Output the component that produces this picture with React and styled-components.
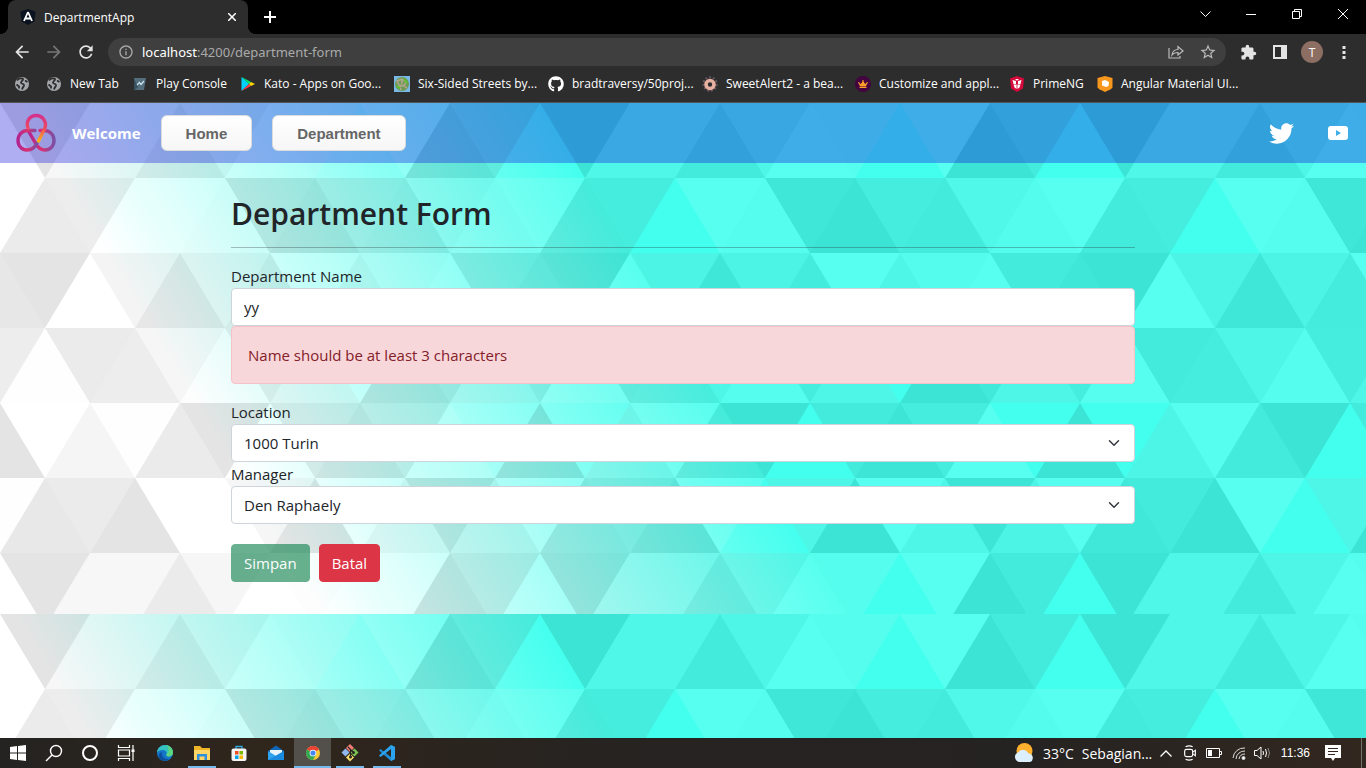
import React from "react";
import styled, { createGlobalStyle } from "styled-components";
import { FaGithub, FaTwitter, FaCrown } from "react-icons/fa";
import { MdExtension, MdRefresh, MdStarBorder, MdArrowBack, MdArrowForward, MdInfoOutline } from "react-icons/md";

const uiFont = `"Open Sans", "Segoe UI", sans-serif`;

const GlobalStyle = createGlobalStyle`
  *, *::before, *::after { box-sizing: border-box; }
  body { margin: 0; font-family: ${uiFont}; color: #212529; }
  button, input, select { font: inherit; margin: 0; }
  svg { display: block; flex-shrink: 0; }
`;

/* ---------- layout ---------- */

const Shell = styled.div`
  min-height: 100vh;
  display: flex;
  flex-direction: column;
`;

const TabStrip = styled.header`
  display: flex;
  align-items: stretch;
  height: 34px;
  padding: 0 0 0 8px;
  background: #000;
  color: #fff;
`;

const Tab = styled.div`
  position: relative;
  display: flex;
  align-items: center;
  gap: 8px;
  width: 240px;
  padding: 0 8px 0 12px;
  border-radius: 8px 8px 0 0;
  background: #2d2d2d;
  font-size: 12px;
  &::before, &::after {
    content: "";
    position: absolute;
    bottom: 0;
    width: 8px;
    height: 8px;
  }
  &::before { left: -8px; background: radial-gradient(circle at 0 0, transparent 8px, #2d2d2d 8px); }
  &::after { right: -8px; background: radial-gradient(circle at 100% 0, transparent 8px, #2d2d2d 8px); }
`;

const TabTitle = styled.span`
  flex: 1;
`;

const IconButton = styled.button`
  display: grid;
  place-items: center;
  width: ${(p) => p.$w || 32}px;
  height: ${(p) => p.$h || 28}px;
  padding: 0;
  border: 0;
  background: none;
  color: ${(p) => p.$color || "#e4e4e4"};
`;

const WindowControls = styled.div`
  display: flex;
  margin-left: auto;
`;

const Toolbar = styled.div`
  display: flex;
  align-items: center;
  height: 36px;
  padding: 0 6px;
  background: #2d2d2d;
`;

const AddressBar = styled.div`
  display: flex;
  align-items: center;
  flex: 1;
  height: 28px;
  margin: 0 6px 0 6px;
  padding: 0 2px 0 10px;
  gap: 8px;
  border-radius: 14px;
  background: #3f3f3f;
  color: #aaa;
`;

const AddressText = styled.span`
  flex: 1;
  font-size: 13px;
  font-family: "Noto Sans", ${uiFont};
  b { color: #fff; font-weight: 400; }
`;

const Avatar = styled.span`
  display: grid;
  place-items: center;
  width: 22px;
  height: 22px;
  border-radius: 50%;
  background: #8d6e63;
  color: #fff;
  font-size: 12px;
`;

const Bookmarks = styled.nav`
  display: flex;
  align-items: center;
  height: 33px;
  padding: 0 14px 5px;
  gap: 16px;
  background: #2d2d2d;
  border-bottom: 1px solid #555;
`;

const Bookmark = styled.a`
  display: flex;
  align-items: center;
  gap: 8px;
  flex: 0 0 auto;
  width: ${(p) => p.$w}px;
  color: #fff;
  font-size: 12px;
  white-space: nowrap;
  text-decoration: none;
`;

const Page = styled.div`
  position: relative;
  flex: 1;
  overflow: hidden;
  background: #44ffee;
`;

const Backdrop = styled.svg`
  position: absolute;
  inset: 0;
  width: 100%;
  height: 100%;
`;

const NavBar = styled.nav`
  position: relative;
  display: flex;
  align-items: center;
  height: 60px;
  padding: 0 18px 0 16px;
  background: rgba(20, 18, 220, 0.34);
`;

const Welcome = styled.span`
  margin: 0 20px 0 16px;
  color: #fff;
  font-size: 15px;
  font-weight: 700;
`;

const NavButton = styled.button`
  height: 36px;
  margin-right: 20px;
  padding: 0 24px;
  border: 1px solid #dcdcdc;
  border-radius: 6px;
  background: linear-gradient(#fff, #f6f6f6);
  color: #666;
  font-family: "Liberation Sans", Arial, sans-serif;
  font-size: 15px;
  font-weight: 700;
`;

const Social = styled.div`
  display: flex;
  align-items: center;
  gap: 34px;
  margin-left: auto;
  a { color: #fff; }
`;

const Form = styled.form`
  position: relative;
  width: calc(100% - 48px);
  max-width: 904px;
  margin: 0 auto;
  padding: 32px 0;
  font-size: 15px;
  line-height: 24px;
`;

const Title = styled.h1`
  margin: 0;
  padding-bottom: 14px;
  border-bottom: 1px solid rgba(33, 37, 41, 0.3);
  font-size: 30px;
  line-height: 38px;
  font-weight: 600;
`;

const Field = styled.div`
  margin-top: ${(p) => p.$top || 0}px;
`;

const Label = styled.label`
  display: block;
`;

const control = `
  display: block;
  width: 100%;
  height: 38px;
  padding: 6px 12px;
  border: 1px solid #ced4da;
  border-radius: 4px;
  background: #fff;
  color: #212529;
  font-size: 15px;
  line-height: 24px;
`;

const TextInput = styled.input`${control}`;

const Select = styled.select`
  ${control}
  appearance: none;
`;

const SelectBox = styled.div`
  position: relative;
  svg { position: absolute; right: 13px; top: 13px; pointer-events: none; }
`;

const Alert = styled.div`
  padding: 16px;
  border: 1px solid #f5c2c7;
  border-radius: 4px;
  background: #f8d7da;
  color: #842029;
`;

const Actions = styled.div`
  display: flex;
  gap: 9px;
  margin-top: 20px;
`;

const Button = styled.button`
  height: 38px;
  padding: 6px 12px;
  border: 1px solid ${(p) => p.$color};
  border-radius: 4px;
  background: ${(p) => p.$color};
  color: #fff;
  font-weight: 500;
  line-height: 24px;
  &:disabled { opacity: 0.65; }
`;

const Taskbar = styled.footer`
  display: flex;
  height: 30px;
  background: linear-gradient(90deg, #242321, #30261c 20%, #262321 45%, #252322 75%, #32271f);
  color: #fff;
`;

const TaskGroup = styled.div`
  display: flex;
  margin-left: ${(p) => p.$left || 0}px;
`;

const TaskButton = styled.button`
  display: grid;
  place-items: center;
  width: ${(p) => p.$w}px;
  height: 30px;
  padding: 0;
  border: 0;
  background: ${(p) => (p.$active ? "#53504c" : "none")};
  background-image: ${(p) => (p.$open ? "linear-gradient(#76b9ed, #76b9ed)" : "none")};
  background-repeat: no-repeat;
  background-position: bottom;
  background-size: ${(p) => (p.$active ? "100%" : "28px")} 2px;
`;

const Tray = styled.div`
  display: flex;
  align-items: center;
  margin-left: auto;
`;

const Weather = styled.div`
  display: flex;
  align-items: center;
  gap: 8px;
  width: 141px;
  white-space: nowrap;
  font-size: 14px;
`;

const Clock = styled.time`
  width: 38px;
  text-align: right;
  font-size: 12px;
  font-family: "Liberation Sans", sans-serif;
`;

const ShowDesktop = styled.div`
  width: 5px;
  height: 30px;
  margin-left: 5px;
  border-left: 1px solid #77706a;
`;

/* ---------- backdrop ---------- */

const SIDE = 90;
const ROW = 75;
const TILE = 511;
const COLUMNS = 60;

// Shade of each facet: 0 is clear, 1 (lightest) to 5 (darkest).
const SHADES = [
  [5, 2.2, 2.2, 4, 2.3, 1, 1.3, 0, 1, 5, 4, 0],
  [4, 3.6, 0, 1, 1.3, 4.6, 5, 3.6, 4, 2, 1.4, 1],
  [5, 1, 2.7, 4.6, 2.6, 3.8, 1, 2.3, 1.5, 1, 4, 4.6],
  [1.2, 3.9, 3.7, 2.3, 1.3, 3.7, 2.3, 0, 5, 4.2, 2.4, 3.6],
  [0, 2.5, 1.2, 4, 5, 0, 4, 4.8, 3.7, 1, 0, 5],
  [4.4, 4, 5, 1, 0, 2.4, 5, 1, 2.4, 4.8, 2.6, 1.2],
];

const facets = [];
for (let r = 0; r < 7; r++) {
  const shades = SHADES[r % 6];
  const y = r * ROW;
  for (let i = -1; i < COLUMNS; i++) {
    const level = shades[(i + 12) % 12];
    if (!level) continue;
    const mid = (i + 1) * (SIDE / 2);
    const down = (i + r + 12) % 2 === 0;
    const [base, tip] = down ? [y, y + ROW] : [y + ROW, y];
    const g = Math.round((255 * (5 - level)) / 4);
    facets.push(
      <polygon
        key={`${r}-${i}`}
        points={`${mid - 45},${base} ${mid + 45},${base} ${mid},${tip}`}
        fill={`rgb(${g},${g},${g})`}
        fillOpacity="0.105"
      />
    );
  }
}

const Triangles = () => (
  <Backdrop aria-hidden="true">
    <defs>
      <linearGradient id="wash" gradientUnits="userSpaceOnUse" x1="15" y1="0" x2="405" y2="-234">
        <stop offset="0" stopColor="#fff" />
        <stop offset="1" stopColor="#43ffee" />
      </linearGradient>
      <clipPath id="tile"><rect width="2700" height={TILE} /></clipPath>
      <g id="facets" clipPath="url(#tile)">
        <rect width="2700" height={TILE} fill="url(#wash)" />
        {facets}
      </g>
    </defs>
    <use href="#facets" />
    <use href="#facets" y={TILE} />
    <use href="#facets" y={TILE * 2} />
  </Backdrop>
);

/* ---------- icons ---------- */

const Logo = () => (
  <svg width="40" height="40" viewBox="0 0 40 40" fill="none" strokeWidth="3.400" strokeLinecap="round">
    <defs>
      <linearGradient id="lg1" x1="0" y1="0" x2="0" y2="1">
        <stop offset="0" stopColor="#d4318c" /><stop offset=".5" stopColor="#ef4a5f" /><stop offset="1" stopColor="#fbb116" />
      </linearGradient>
      <linearGradient id="lg2" x1="0" y1="0" x2="1" y2="0">
        <stop offset="0" stopColor="#b1248f" /><stop offset=".5" stopColor="#d9306f" /><stop offset="1" stopColor="#7a4fa5" />
      </linearGradient>
    </defs>
    <path d="M24 17.500H28C34 17.500 38 22 38 27.500C38 33 34 37 29 37C25 37 22 34.500 20 31L13 19" stroke="url(#lg2)" />
    <path d="M21 30C19 34.500 16 37 11 37C6 37 2 33 2 27.500C2 22 6 17.500 12 17.500H19" stroke="url(#lg2)" />
    <path d="M12 15C9.500 8.500 14 2.500 20 2.500C27 2.500 31.500 9.500 28.500 16L22.500 28" stroke="url(#lg1)" />
  </svg>
);

const YouTube = () => (
  <svg width="20" height="14" viewBox="0 0 20 14">
    <path fillRule="evenodd" fill="currentColor" d="M3 0H17Q20 0 20 3V11Q20 14 17 14H3Q0 14 0 11V3Q0 0 3 0ZM8 4V10L13 7Z" />
  </svg>
);

const Chevron = () => (
  <svg width="16" height="12" viewBox="0 0 16 16"><path d="M2 5l6 6 6-6" fill="none" stroke="#343a40" strokeWidth="2" strokeLinecap="round" strokeLinejoin="round" /></svg>
);

const AngularShield = () => (
  <svg width="16" height="16" viewBox="0 0 16 16">
    <path d="M8 0L15.500 2.500L14.500 12.500L8 16L1.500 12.500L.5 2.500Z" fill="#0b1220" />
    <path d="M8 3L4 12M8 3L12 12M5.500 9.500H10.500" stroke="#fff" strokeWidth="1.800" fill="none" />
  </svg>
);

const Globe = () => (
  <svg width="16" height="16" viewBox="0 0 16 16">
    <circle cx="8" cy="8" r="7" fill="#a4a8ad" />
    <path d="M3 4.500C5 2 8 2 9 3C9.500 4.500 7 5 7 6.500C7 8 9.500 7.500 10 9C10.500 10.500 8.500 11 8 13.500M11 4.500L13.500 6M2.500 8.500L5 10.500V12.500" stroke="#2d2d2d" strokeWidth="1.800" fill="none" />
  </svg>
);

const PlayConsole = () => (
  <svg width="16" height="16" viewBox="0 0 16 16">
    <path d="M2 2H14L12 14H8L2 14Z" fill="#54707d" /><path d="M2 2V15L6 11Z" fill="#37515e" />
    <path d="M5 9L7.500 6.500L9 8.500L12 5" stroke="#cfe6f0" strokeWidth="1.200" fill="none" />
  </svg>
);

const GooglePlay = () => (
  <svg width="16" height="16" viewBox="0 0 16 16">
    <path d="M1.500 1V15L9 8Z" fill="#00d0ff" /><path d="M1.500 1L11 6L9 8Z" fill="#00e676" />
    <path d="M1.500 15L11 10L9 8Z" fill="#ff3a44" /><path d="M11 6L15 8L11 10L9 8Z" fill="#ffd500" />
  </svg>
);

const HexMap = () => (
  <svg width="16" height="16" viewBox="0 0 16 16">
    <rect width="16" height="16" fill="#79b9e8" />
    <circle cx="8" cy="8" r="7" fill="#6f9a56" />
    <path d="M3 5L8 3L12 6L10 10L5 9ZM8 3V8M5 9L7 14M10 10L13 12" stroke="#b6a58f" strokeWidth="1.500" fill="none" />
    <path d="M3 10L6 12M10 3L13 7" stroke="#5cc32d" strokeWidth="2" />
  </svg>
);

const Donut = () => (
  <svg width="16" height="16" viewBox="0 0 16 16" fill="none">
    <circle cx="8" cy="8" r="6.700" stroke="#66545f" strokeWidth="2" strokeDasharray="2 1.800" />
    <circle cx="8" cy="8.500" r="4" stroke="#e8b0a0" strokeWidth="3.600" />
  </svg>
);

const Crown = () => (
  <svg width="16" height="16" viewBox="0 0 16 16">
    <circle cx="8" cy="8" r="8" fill="#43043f" /><FaCrown x="3" y="3" width="10" height="10" size="10" color="#ff9d2b" />
  </svg>
);

const Prime = () => (
  <svg width="16" height="16" viewBox="0 0 16 16">
    <path d="M8 0L15 2.500L14 12.500L8 16L2 12.500L1 2.500Z" fill="#d5093a" />
    <path d="M3.500 4L7 5V8H4.500ZM12.500 4L9 5V8H11.500ZM4.500 8.500H7.600V13L5.500 11.500ZM11.500 8.500H8.400V13L10.500 11.500ZM6 3H10L8 4.800Z" fill="#fff" />
  </svg>
);

const MaterialKit = () => (
  <svg width="16" height="16" viewBox="0 0 16 16">
    <path d="M8 0L15.500 2V11.500Q15 13 8 16Q1 13 .5 11.500V2Z" fill="#f7981d" />
    <path d="M5 5L8 4L12 6L11.500 10L9 11L5 9.500Z" fill="#fff" />
  </svg>
);

const Svg = ({ s = 18, children, ...rest }) => (
  <svg width={s} height={s} viewBox="0 0 18 18" fill="none" stroke="#fff" strokeWidth="1" {...rest}>{children}</svg>
);

const WindowsIcon = () => (
  <Svg><path stroke="none" fill="#fff" d="M1 3L8 2V8.500H1ZM9 2L17 1V8.500H9ZM1 9.500H8V16L1 15ZM9 9.500H17V17L9 16Z" /></Svg>
);
const SearchIcon = () => (<Svg strokeWidth="1.400"><circle cx="11" cy="7" r="5.500" /><path d="M7 11L1 17" /></Svg>);
const CortanaIcon = () => (<Svg strokeWidth="2"><circle cx="9" cy="9" r="7" /></Svg>);
const TaskViewIcon = () => (
  <Svg strokeWidth="1.200"><path d="M1.500 1V3.500H12.500V1M1.500 17V14.500H12.500V17M1.500 6H12.500V12H1.500ZM16 1V17" /><path d="M14.500 5.500H17.500V8H14.500Z" fill="#fff" stroke="none" /></Svg>
);
const EdgeIcon = () => (
  <Svg stroke="none">
    <circle cx="9" cy="9" r="8" fill="#1374c8" />
    <path d="M1 9C1 4 5 1 9 1C14 1 17 5 17 8.500C17 11 15 12.500 12.500 12.500C10.500 12.500 9.500 11.500 10.500 10C11.500 8 9 5.500 6 6C3 6.300 1.500 7.500 1 9Z" fill="#35c1c0" />
    <path d="M10 1C14.500 1.500 17 5 17 8.500C17 11 15 12.500 12.500 12.500C11 12.500 10 11.500 10.500 10C13 9 14 3 10 1Z" fill="#5ed67f" />
    <path d="M6 8C5 12 8 15.500 13 15C11 17 7 17.500 4 15C2 12 3 9 6 8Z" fill="#0c4f9e" />
  </Svg>
);
const FolderIcon = () => (
  <Svg stroke="none"><path d="M1 2H7L9 4H17V16H1Z" fill="#f0b429" /><path d="M1 6H17V16H1Z" fill="#ffd767" /><path d="M4 16V10H14V16H11.500V12.500H6.500V16Z" fill="#2f8fdd" /></Svg>
);
const StoreIcon = () => (
  <Svg stroke="none">
    <path d="M6 5V2.500H12V5" stroke="#2fa8e0" strokeWidth="1.300" /><rect x="1.500" y="4.500" width="15" height="12.500" rx="2" fill="#f4f4f4" />
    <path d="M5 7H8.500V10.500H5Z" fill="#f25022" /><path d="M9.500 7H13V10.500H9.500Z" fill="#7fba00" />
    <path d="M5 11.500H8.500V15H5Z" fill="#00a4ef" /><path d="M9.500 11.500H13V15H9.500Z" fill="#ffb900" />
  </Svg>
);
const MailIcon = () => (
  <Svg stroke="none"><path d="M1 7L9 1.500L17 7V16H1Z" fill="#1066b5" /><path d="M3 6H15V12H3Z" fill="#e9f4fc" /><path d="M1 7L9 12L17 7V16H1Z" fill="#2ea3ee" /><path d="M1 16L17 7V16Z" fill="#1b8be0" /></Svg>
);
const ChromeIcon = () => (
  <Svg stroke="none" s={14}>
    <circle cx="9" cy="9" r="9" fill="#fcc934" />
    <path d="M9 9L1.200 4.500A9 9 0 0 1 16.800 4.500Z" fill="#ea4335" />
    <path d="M9 9L1.200 4.500A9 9 0 0 0 9 18L13 11Z" fill="#34a853" />
    <circle cx="9" cy="9" r="4.300" fill="#fff" /><circle cx="9" cy="9" r="3.300" fill="#4285f4" />
  </Svg>
);
const GitIcon = () => (
  <Svg stroke="none">
    <path d="M9 0L13 4L9 8L5 4Z" fill="#f27f78" /><path d="M4.500 4.500L8.500 8.500L4.500 12.500L.5 8.500Z" fill="#90b6ee" />
    <path d="M13.500 4.500L17.500 8.500L13.500 12.500L9.500 8.500Z" fill="#79c657" /><path d="M9 9.500L13 13.500L9 17.500L5 13.500Z" fill="#f5dd6c" />
    <path d="M7 3L12 8M9.500 6V14" stroke="#2b2320" strokeWidth="1.200" /><circle cx="9.500" cy="13" r="1.500" fill="#2b2320" /><circle cx="12.500" cy="8.500" r="1.500" fill="#2b2320" />
  </Svg>
);
const CodeIcon = () => (
  <Svg stroke="none"><path d="M13 1L17 3V15L13 17L1 6.500L2.500 5L13 13Z" fill="#1f8ad2" /><path d="M13 1L1 11.500L2.500 13L13 5V17L17 15V3Z" fill="#2ba3ee" /></Svg>
);
const WeatherIcon = () => (
  <svg width="22" height="22" viewBox="0 0 22 22">
    <circle cx="11.500" cy="9" r="8" fill="#ffb02e" />
    <path d="M6 20A5 5 0 0 1 5 10.500A6 6 0 0 1 15.500 11.500A4.400 4.400 0 0 1 17 20Z" fill="#dcefff" />
  </svg>
);

/* ---------- data ---------- */

const bookmarks = [
  { label: "", icon: <Globe />, w: 16 },
  { label: "New Tab", icon: <Globe />, w: 70 },
  { label: "Play Console", icon: <PlayConsole />, w: 92 },
  { label: "Kato - Apps on Goo...", icon: <GooglePlay />, w: 138 },
  { label: "Six-Sided Streets by...", icon: <HexMap />, w: 138 },
  { label: "bradtraversy/50proj...", icon: <FaGithub size={16} />, w: 138 },
  { label: "SweetAlert2 - a bea...", icon: <Donut />, w: 137 },
  { label: "Customize and appl...", icon: <Crown />, w: 138 },
  { label: "PrimeNG", icon: <Prime />, w: 72 },
  { label: "Angular Material UI...", icon: <MaterialKit />, w: 138 },
];

const systemTasks = [
  ["Start", <WindowsIcon />],
  ["Search", <SearchIcon />],
  ["Cortana", <CortanaIcon />],
  ["Task View", <TaskViewIcon />],
];

const appTasks = [
  { name: "Edge", icon: <EdgeIcon /> },
  { name: "File Explorer", icon: <FolderIcon />, open: true },
  { name: "Store", icon: <StoreIcon /> },
  { name: "Mail", icon: <MailIcon /> },
  { name: "Chrome", icon: <ChromeIcon />, open: true, active: true },
  { name: "Git", icon: <GitIcon />, open: true },
  { name: "Code", icon: <CodeIcon />, open: true },
];

/* ---------- sections ---------- */

const Browser = () => (
  <>
    <TabStrip>
      <Tab>
        <AngularShield />
        <TabTitle>DepartmentApp</TabTitle>
        <IconButton $w={16} $h={16} aria-label="Close tab">
          <svg width="8" height="8" viewBox="0 0 8 8" stroke="#fff" strokeWidth="1.500"><path d="M0 0L8 8M8 0L0 8" /></svg>
        </IconButton>
      </Tab>
      <IconButton $w={44} $h={34} aria-label="New tab">
        <svg width="12" height="12" viewBox="0 0 12 12" stroke="#fff" strokeWidth="2"><path d="M6 0V12M0 6H12" /></svg>
      </IconButton>
      <WindowControls>
        <IconButton $w={46} aria-label="Search tabs">
          <svg width="11" height="6" viewBox="0 0 11 6" fill="none" stroke="#fff"><path d="M.5 .5L5.500 5.500L10.500 .5" /></svg>
        </IconButton>
        <IconButton $w={46} aria-label="Minimize">
          <svg width="10" height="10" viewBox="0 0 10 10" stroke="#fff"><path d="M0 5.500H10" /></svg>
        </IconButton>
        <IconButton $w={46} aria-label="Restore">
          <svg width="10" height="10" viewBox="0 0 10 10" fill="none" stroke="#fff"><path d="M.5 2.500H7.500V9.500H.5ZM2.500 2.500V.5H9.500V7.500H7.500" /></svg>
        </IconButton>
        <IconButton $w={46} aria-label="Close">
          <svg width="10" height="10" viewBox="0 0 10 10" stroke="#fff"><path d="M0 0L10 10M10 0L0 10" /></svg>
        </IconButton>
      </WindowControls>
    </TabStrip>
    <Toolbar>
      <IconButton aria-label="Back"><MdArrowBack size={20} /></IconButton>
      <IconButton $color="#777" aria-label="Forward"><MdArrowForward size={20} /></IconButton>
      <IconButton aria-label="Reload"><MdRefresh size={20} /></IconButton>
      <AddressBar>
        <MdInfoOutline size={16} />
        <AddressText><b>localhost</b>:4200/department-form</AddressText>
        <IconButton $w={16} $color="#bbb" aria-label="Share">
          <svg width="16" height="16" viewBox="0 0 16 16" fill="none" stroke="currentColor" strokeWidth="1.200">
            <path d="M1 4V14H12V12M4 11C4.500 7 7 5.500 10 5.500V2.500L15 7L10 11V8.500C7.500 8.500 5.500 9 4 11Z" />
          </svg>
        </IconButton>
        <IconButton $color="#bbb" aria-label="Bookmark this page"><MdStarBorder size={18} /></IconButton>
      </AddressBar>
      <IconButton aria-label="Extensions"><MdExtension size={17} /></IconButton>
      <IconButton aria-label="Side panel">
        <svg width="14" height="14" viewBox="0 0 14 14" fill="none" stroke="currentColor" strokeWidth="2"><path d="M1 1H13V13H1Z" /><path d="M9 1H13V13H9Z" fill="currentColor" /></svg>
      </IconButton>
      <IconButton aria-label="Profile"><Avatar>T</Avatar></IconButton>
      <IconButton aria-label="Menu">
        <svg width="4" height="14" viewBox="0 0 4 14" fill="currentColor"><path d="M.5 1H3.500V4H.5ZM.5 6H3.500V9H.5ZM.5 11H3.500V14H.5Z" /></svg>
      </IconButton>
    </Toolbar>
    <Bookmarks aria-label="Bookmarks">
      {bookmarks.map((b, i) => (
        <Bookmark key={i} href="#" $w={b.w}>{b.icon}{b.label}</Bookmark>
      ))}
    </Bookmarks>
  </>
);

const DepartmentForm = () => (
  <Form onSubmit={(e) => e.preventDefault()}>
    <Title>Department Form</Title>
    <Field $top={16}>
      <Label htmlFor="name">Department Name</Label>
      <TextInput id="name" defaultValue="yy" />
      <Alert role="alert">Name should be at least 3 characters</Alert>
    </Field>
    <Field $top={16}>
      <Label htmlFor="location">Location</Label>
      <SelectBox>
        <Select id="location"><option>1000 Turin</option></Select>
        <Chevron />
      </SelectBox>
    </Field>
    <Field>
      <Label htmlFor="manager">Manager</Label>
      <SelectBox>
        <Select id="manager"><option>Den Raphaely</option></Select>
        <Chevron />
      </SelectBox>
    </Field>
    <Actions>
      <Button type="submit" $color="#198754" disabled>Simpan</Button>
      <Button type="button" $color="#dc3545">Batal</Button>
    </Actions>
  </Form>
);

const Desktop = () => (
  <Taskbar>
    <TaskGroup>
      {systemTasks.map(([name, icon]) => (
        <TaskButton key={name} $w={36} aria-label={name}>{icon}</TaskButton>
      ))}
    </TaskGroup>
    <TaskGroup $left={2}>
      {appTasks.map((t) => (
        <TaskButton key={t.name} $w={37} $open={t.open} $active={t.active} aria-label={t.name}>{t.icon}</TaskButton>
      ))}
    </TaskGroup>
    <Tray>
      <Weather><WeatherIcon /><span>33°C</span><span>Sebagian...</span></Weather>
      <IconButton $w={24} aria-label="Show hidden icons">
        <svg width="12" height="7" viewBox="0 0 12 7" fill="none" stroke="#fff" strokeWidth="1.300"><path d="M.5 6.500L6 1L11.500 6.500" /></svg>
      </IconButton>
      <IconButton $w={24} aria-label="Meet now">
        <Svg s={16} strokeWidth="1.300"><rect x="3" y="5" width="9" height="8" rx="2" /><path d="M12 8L15 6V12L12 10M4 2Q8 0 12 2M4 16Q8 18 12 16" /></Svg>
      </IconButton>
      <IconButton $w={24} aria-label="Battery">
        <svg width="16" height="10" viewBox="0 0 16 10" fill="none" stroke="#fff"><path d="M.5 .5H13.500V9.500H.5ZM13.500 3.500H15.500V6.500H13.500" /><path d="M2 2H6V8H2Z" fill="#fff" stroke="none" /></svg>
      </IconButton>
      <IconButton $w={26} aria-label="Network">
        <svg width="14" height="14" viewBox="0 0 14 14" fill="none" stroke="#ddd"><path d="M1 12A11 11 0 0 1 13 2M4 13A8.500 8.500 0 0 1 13 5M7 13A6 6 0 0 1 13 8" /><circle cx="11.500" cy="12" r="1.500" fill="#fff" /></svg>
      </IconButton>
      <IconButton $w={20} aria-label="Volume">
        <svg width="17" height="14" viewBox="0 0 17 14" fill="none" stroke="#fff"><path d="M.5 4.500H3L7 1V13L3 9.500H.5Z" /><path d="M9 5Q10 7 9 9M11.500 3Q13.500 7 11.500 11" /><path d="M14 2Q17 7 14 12" stroke="#888" /></svg>
      </IconButton>
      <Clock>11:36</Clock>
      <IconButton $w={46} aria-label="Notifications">
        <svg width="16" height="16" viewBox="0 0 16 16"><path fillRule="evenodd" fill="#fff" d="M0 0H16V13H10L8 16L6 13H0ZM3 3V4H13V3ZM3 6V7H13V6ZM3 9V10H10V9Z" /></svg>
      </IconButton>
      <ShowDesktop />
    </Tray>
  </Taskbar>
);

export default function App() {
  return (
    <Shell>
      <GlobalStyle />
      <Browser />
      <Page>
        <Triangles />
        <NavBar>
          <Logo />
          <Welcome>Welcome</Welcome>
          <NavButton type="button">Home</NavButton>
          <NavButton type="button">Department</NavButton>
          <Social>
            <a href="#" aria-label="Twitter"><FaTwitter size={25} /></a>
            <a href="#" aria-label="YouTube"><YouTube /></a>
          </Social>
        </NavBar>
        <DepartmentForm />
      </Page>
      <Desktop />
    </Shell>
  );
}
